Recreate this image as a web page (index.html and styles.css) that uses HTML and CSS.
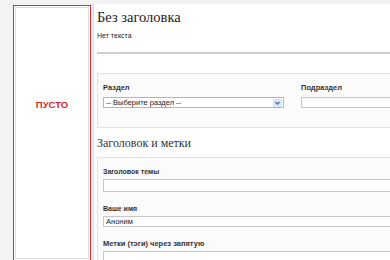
FILE: index.html
```html
<!DOCTYPE html>
<html lang="ru">
<head>
<meta charset="utf-8">
<title>Без заголовка</title>
<link rel="stylesheet" href="styles.css">
</head>
<body>
<div class="page">
  <aside class="sidebar"><span class="empty">ПУСТО</span></aside>
  <main class="main">
    <h1 class="title">Без заголовка</h1>
    <p class="desc">Нет текста</p>
    <hr class="rule">
    <section class="panel panel-section">
      <div class="field field-section">
        <label class="label">Раздел</label>
        <div class="select">
          <span class="select-text">-- Выберите раздел --</span>
          <span class="arrow"><svg width="9" height="8" viewBox="0 0 9 8"><path d="M2.5 3 L4.5 5 L6.5 3" fill="none" stroke="#4a6fb5" stroke-width="1.3"/></svg></span>
        </div>
      </div>
      <div class="field field-sub">
        <label class="label">Подраздел</label>
        <div class="input input-open"></div>
      </div>
    </section>
    <h2 class="subtitle">Заголовок и метки</h2>
    <section class="panel panel-meta">
      <div class="field">
        <label class="label label-small">Заголовок темы</label>
        <div class="input input-tall input-open"></div>
      </div>
      <div class="field field-gap">
        <label class="label label-small">Ваше имя</label>
        <div class="input input-open"><span class="input-text">Аноним</span></div>
      </div>
      <div class="field field-gap">
        <label class="label">Метки (тэги) через запятую</label>
        <div class="input input-open input-last"></div>
      </div>
    </section>
  </main>
</div>
</body>
</html>
```
FILE: styles.css
```css
html, body {
  margin: 0;
  overflow: hidden;
}
body {
  background: #f3f3f3;
  font-family: "Liberation Sans", Arial, sans-serif;
  color: #333;
}
.page {
  display: flex;
  align-items: flex-start;
  width: 390px;
  height: 260px;
  overflow: hidden;
}
.sidebar {
  flex-shrink: 0;
  box-sizing: border-box;
  width: 78px;
  height: 255px;
  margin: 5px 0 0 13px;
  padding-top: 93px;
  border: 1px solid #e02828;
  border-bottom: 0;
  box-shadow: inset 0 0 0 1px #fff, inset 0 0 0 2px #dcdcdc;
  background: #fff;
  text-align: center;
}
.empty {
  display: block;
  font: bold 9.5px/11px "Liberation Sans", Arial, sans-serif;
  color: #d81f1f;
}
.main {
  flex: 1;
  min-width: 0;
  box-sizing: border-box;
  height: 256px;
  margin: 4px 0 0 2px;
  padding: 5px 0 0 3px;
  background: #fff;
  border-left: 1px solid #dedede;
}
.title {
  margin: 0;
  font: 400 14.5px/17px "Liberation Serif", "Times New Roman", serif;
  color: #222;
}
.desc {
  margin: 5px 0 0;
  font-size: 7px;
  line-height: 9px;
  color: #222;
}
.rule {
  margin: 12px 0 0;
  height: 0;
  border: 0;
  border-top: 2px solid #cfcfcf;
}
.panel {
  border: 1px solid #e2e2e2;
  border-right: 0;
  background: #fbfbfb;
  padding: 9px 0 19px 5px;
}
.panel-section {
  margin-top: 19px;
  display: flex;
  gap: 17px;
}
.field-section {
  width: 181px;
  flex-shrink: 0;
}
.field-sub {
  flex: 1;
  min-width: 0;
}
.label {
  display: block;
  font-weight: bold;
  font-size: 7.5px;
  line-height: 9px;
  color: #333;
  margin-bottom: 5px;
  white-space: nowrap;
}
.panel-meta .label {
  margin-bottom: 3px;
}
.label-small {
  font-size: 7px;
}
.select {
  box-sizing: border-box;
  height: 11px;
  display: flex;
  align-items: center;
  justify-content: space-between;
  border: 1px solid #b5b5b5;
  background: #fff;
  padding: 0 1px 0 2px;
}
.select-text, .input-text {
  font-size: 7.5px;
  line-height: 9px;
  color: #222;
}
.arrow {
  width: 9px;
  height: 8px;
  display: flex;
  background: #dbe4f4;
  border-radius: 1px;
}
.input {
  box-sizing: border-box;
  height: 11px;
  border: 1px solid #c6c6c6;
  background: #fff;
  padding: 0 2px;
  display: flex;
  align-items: center;
}
.input-open {
  border-right: 0;
}
.input-tall {
  height: 13px;
}
.input-last {
  height: 10px;
  border-bottom: 0;
}
.subtitle {
  margin: 8px 0 0;
  font: 400 12px/14px "Liberation Serif", "Times New Roman", serif;
  color: #333;
}
.panel-meta {
  margin-top: 7px;
  padding-bottom: 0;
  border-bottom: 0;
}
.field-gap {
  margin-top: 12px;
}
```
